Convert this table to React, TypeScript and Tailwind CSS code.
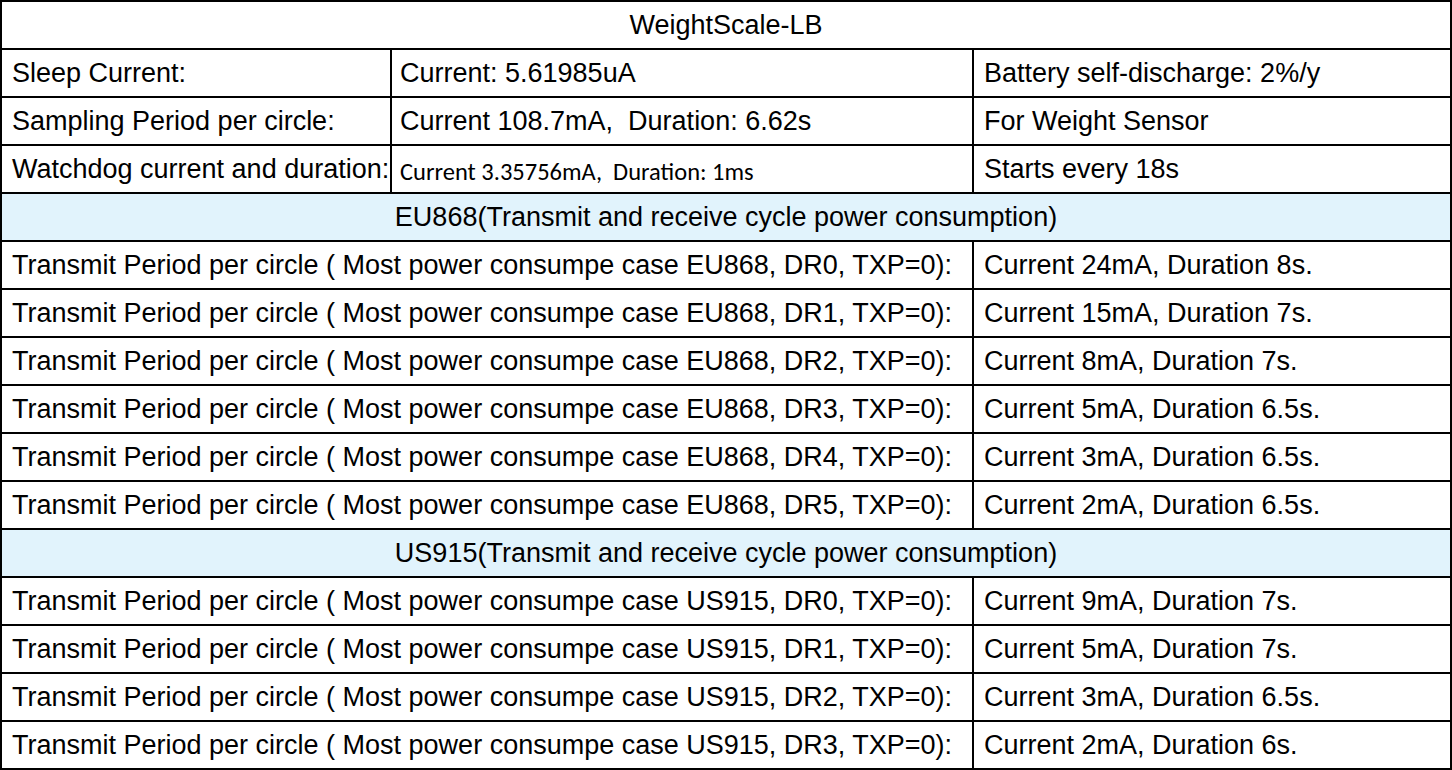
import React from "react";

const eu = [
  ["DR0", "Current 24mA, Duration 8s."],
  ["DR1", "Current 15mA, Duration 7s."],
  ["DR2", "Current 8mA, Duration 7s."],
  ["DR3", "Current 5mA, Duration 6.5s."],
  ["DR4", "Current 3mA, Duration 6.5s."],
  ["DR5", "Current 2mA, Duration 6.5s."],
];
const us = [
  ["DR0", "Current 9mA, Duration 7s."],
  ["DR1", "Current 5mA, Duration 7s."],
  ["DR2", "Current 3mA, Duration 6.5s."],
  ["DR3", "Current 2mA, Duration 6s."],
];

function Row3({ a, b, c, bClass = "" }: { a: string; b: string; c: string; bClass?: string }) {
  return (
    <div className="grid grid-cols-[388px_582px_478px] h-[48px] border-t-2 border-black">
      <div className="flex items-center pl-[10px] whitespace-nowrap overflow-hidden">{a}</div>
      <div className={"flex items-center pl-[8px] border-l-2 border-black whitespace-pre " + bClass}>{b}</div>
      <div className="flex items-center pl-[10px] border-l-2 border-black whitespace-nowrap">{c}</div>
    </div>
  );
}

function Row2({ a, b }: { a: string; b: string }) {
  return (
    <div className="grid grid-cols-[970px_478px] h-[48px] border-t-2 border-black">
      <div className="flex items-center pl-[10px] whitespace-nowrap">{a}</div>
      <div className="flex items-center pl-[10px] border-l-2 border-black whitespace-nowrap">{b}</div>
    </div>
  );
}

function Section({ t }: { t: string }) {
  return (
    <div className="flex items-center justify-center h-[48px] border-t-2 border-black bg-[#e1f3fc]">{t}</div>
  );
}

export default function App() {
  return (
    <div className="bg-white">
      <div className="w-[1452px] h-[770px] border-2 border-black text-black text-[27px] leading-none font-['Liberation_Sans',Arial,sans-serif]">
        <div className="flex items-center justify-center h-[46px]">WeightScale-LB</div>
        <Row3 a="Sleep Current:" b="Current: 5.61985uA" c="Battery self-discharge: 2%/y" />
        <Row3 a="Sampling Period per circle:" b="Current 108.7mA,  Duration: 6.62s" c="For Weight Sensor" />
        <Row3
          a="Watchdog current and duration:"
          b="Current 3.35756mA,  Duration: 1ms"
          c="Starts every 18s"
          bClass="font-['Carlito','Open_Sans',sans-serif] text-[24.5px] pt-[6px]"
        />
        <Section t="EU868(Transmit and receive cycle power consumption)" />
        {eu.map(([dr, v]) => (
          <Row2 key={"eu" + dr} a={`Transmit Period per circle ( Most power consumpe case EU868, ${dr}, TXP=0):`} b={v} />
        ))}
        <Section t="US915(Transmit and receive cycle power consumption)" />
        {us.map(([dr, v]) => (
          <Row2 key={"us" + dr} a={`Transmit Period per circle ( Most power consumpe case US915, ${dr}, TXP=0):`} b={v} />
        ))}
      </div>
    </div>
  );
}
